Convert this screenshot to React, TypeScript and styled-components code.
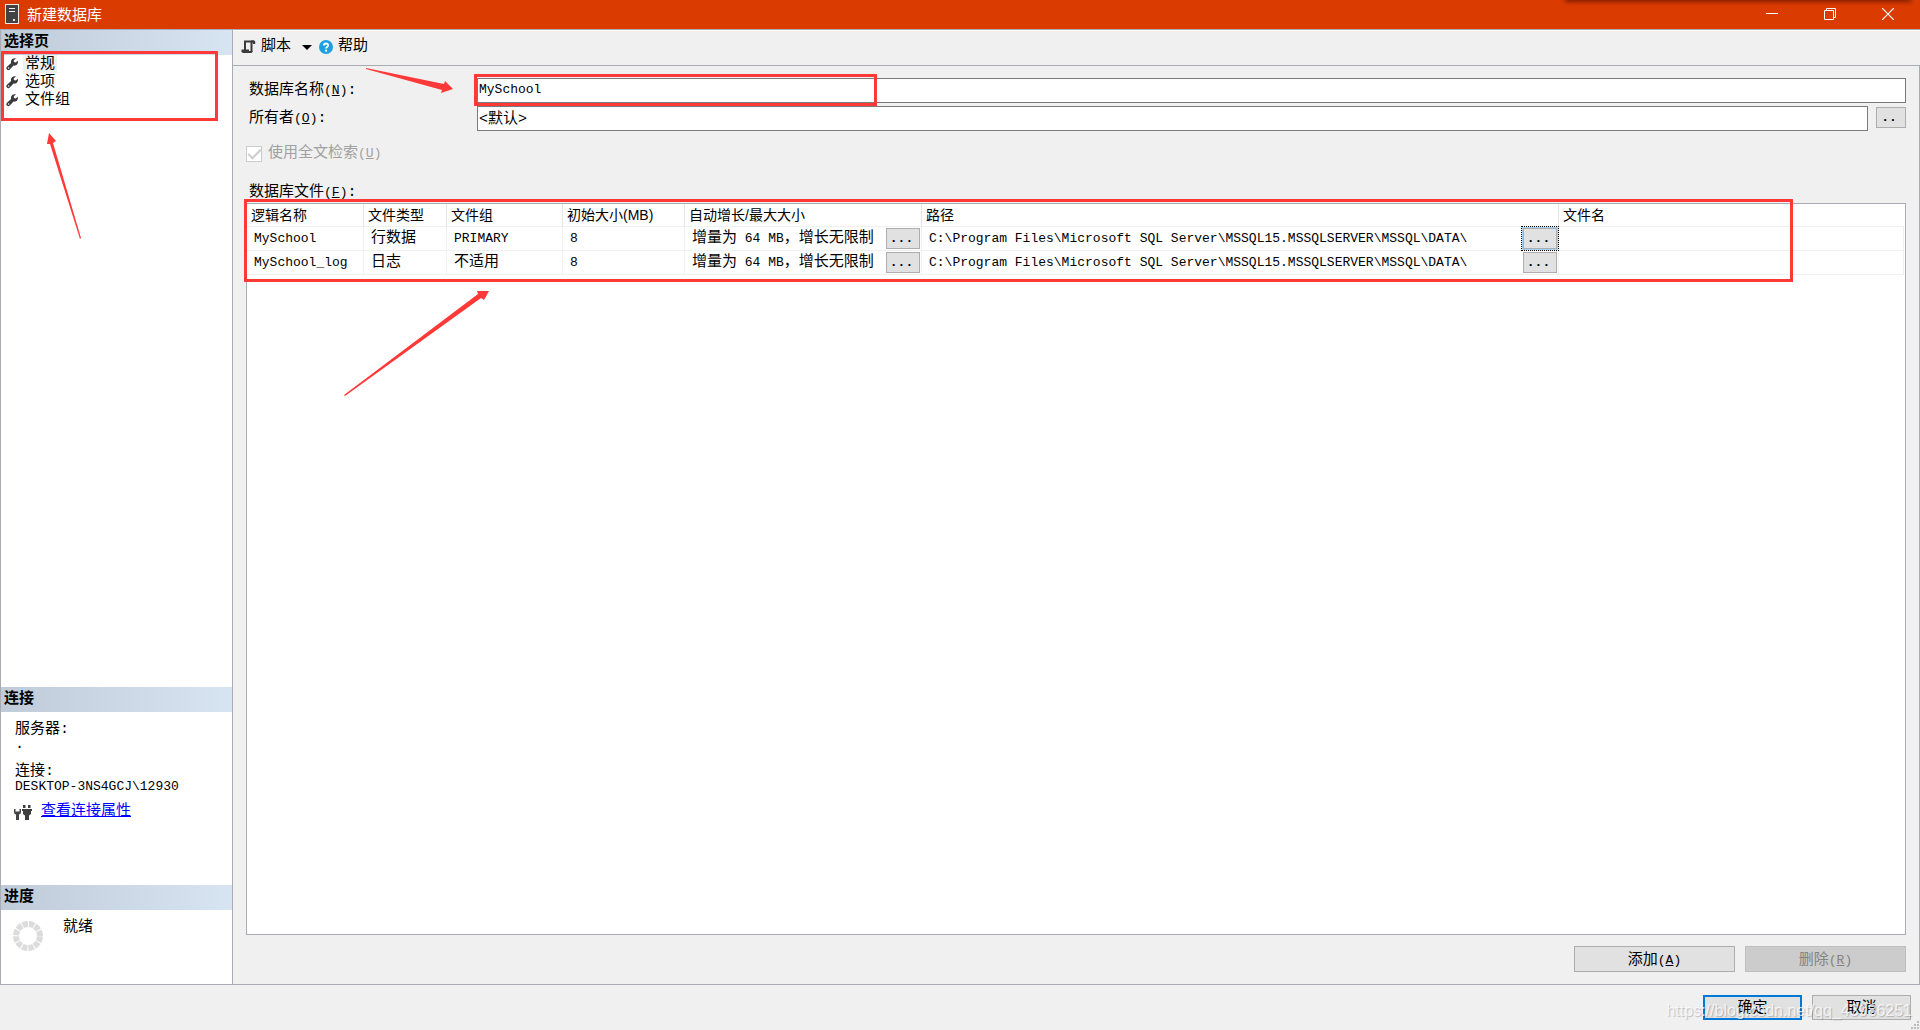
import React from "react";
import styled, { createGlobalStyle, css } from "styled-components";

const RED = "#ff3838";
const LINE = "#a9acb2";

const GlobalStyle = createGlobalStyle`
  * { box-sizing: border-box; }
  html, body { margin: 0; height: 100%; }
  #root { height: 100%; }
  body, button, input {
    font-family: "Liberation Mono", "Noto Sans CJK SC", monospace;
    font-size: 15px;
    line-height: 18px;
    color: #000;
  }
`;

const Window = styled.div`
  min-height: 100vh;
  display: flex;
  flex-direction: column;
  background: #f0f0f0;
  position: relative;
  overflow: hidden;
`;

const Latin = styled.span`
  font-size: 13px;
`;

const TitleBar = styled.header`
  height: 29px;
  display: flex;
  align-items: center;
  padding: 0 3px 1px 5px;
  background: #da3b01;
  color: #fff;
  position: relative;
`;

const Title = styled.h1`
  flex: 1;
  margin: 0 0 0 8px;
  font: 400 15px/20px "Noto Sans CJK SC", sans-serif;
`;

const TitleShadow = styled.div`
  position: absolute;
  top: -4px;
  right: 10px;
  width: 344px;
  height: 4px;
  box-shadow: 0 1px 4px 1px rgba(90, 20, 0, 0.7);
`;

const CaptionButton = styled.button`
  width: 58px;
  height: 28px;
  padding: 0;
  border: 0;
  background: transparent;
  color: #fff;
  display: flex;
  align-items: center;
  justify-content: center;
`;

const Body = styled.div`
  flex: 1;
  display: flex;
  border-top: 1px solid ${LINE};
  border-left: 1px solid ${LINE};
  border-bottom: 1px solid ${LINE};
`;

const Sidebar = styled.aside`
  width: 232px;
  display: flex;
  flex-direction: column;
  background: #fff;
  border-right: 1px solid ${LINE};
`;

const SideHeader = styled.h2`
  height: 25px;
  margin: 0;
  padding-left: 3px;
  font: 700 15px/20px "Noto Sans CJK SC", sans-serif;
  background: linear-gradient(90deg, #bfcbd9, #d7e4f2);
`;

const PageSection = styled.nav`
  flex: 1;
`;

const ConnectionSection = styled.section`
  height: 198px;
`;

const ProgressSection = styled.section`
  height: 99px;
`;

const PageList = styled.ul`
  list-style: none;
  margin: 0;
  padding: 0;
`;

const PageItem = styled.li`
  display: flex;
  align-items: center;
  height: 18px;
  padding-left: 5px;
  gap: 3px;
`;

const PageLink = styled.a<{ $active?: boolean }>`
  height: 18px;
  padding: 0 2px;
  line-height: 20px;
  color: #000;
  text-decoration: none;
  background: ${(p) => (p.$active ? "#f0f0f0" : "transparent")};
`;

const ConnectionInfo = styled.dl`
  margin: 0;
  padding: 9px 14px 0;
  dt { height: 16px; line-height: 18px; }
  dd { margin: 0 0 10px; line-height: 16px; }
  dd:last-child { margin-bottom: 8px; }
`;

const LinkRow = styled.div`
  display: flex;
  align-items: center;
  gap: 8px;
  padding: 0 12px;
`;

const PropertiesLink = styled.a`
  color: #0000ff;
  text-decoration: underline;
`;

const ProgressRow = styled.div`
  display: flex;
  align-items: flex-start;
  gap: 20px;
  padding: 9px 12px;
`;

const Main = styled.main`
  flex: 1;
  min-width: 0;
  display: flex;
  flex-direction: column;
`;

const Toolbar = styled.div`
  height: 36px;
  display: flex;
  align-items: center;
  gap: 5px;
  padding: 0 8px 2px;
  border-top: 1px solid #fff;
  border-bottom: 1px solid ${LINE};
`;

const ToolButton = styled.button`
  display: flex;
  align-items: center;
  gap: 5px;
  padding: 0;
  border: 0;
  background: transparent;
`;

const Content = styled.div`
  flex: 1;
  display: flex;
  flex-direction: column;
  padding: 12px 13px 12px 13px;
  border-right: 1px solid ${LINE};
`;

const Field = styled.div`
  display: flex;
  align-items: center;
  height: 25px;
  margin-bottom: 3px;
`;

const FieldLabel = styled.label`
  width: 231px;
  padding-left: 3px;
  white-space: pre;
`;

const TextBox = styled.input`
  flex: 1;
  min-width: 0;
  height: 25px;
  padding: 0 1px 3px;
  border: 1px solid #7a7a7a;
  border-radius: 0;
  background: #fff;
  font-size: ${(p) => (p.readOnly ? "15px" : "13px")};
  outline: 0;
`;

const buttonFace = css`
  border: 1px solid #adadad;
  border-radius: 0;
  background: #e1e1e1;
  padding: 0;
`;

const BrowseButton = styled.button`
  ${buttonFace}
  width: 30px;
  height: 21px;
  margin: 0 0 3px 8px;
  padding-right: 4px;
  font: 700 13px/19px "Liberation Mono", monospace;
`;

const CheckLabel = styled.label`
  display: flex;
  align-items: center;
  gap: 6px;
  height: 20px;
  margin-top: 10px;
  line-height: 20px;
  color: #a0a0a0;
`;

const CheckBox = styled.input`
  appearance: none;
  width: 16px;
  height: 16px;
  margin: 0;
  border: 1px solid #ccc;
  background: #fff;
  display: grid;
  place-items: center;
  &:checked::after {
    content: "";
    width: 11px;
    height: 5px;
    margin-bottom: 3px;
    border-left: 2px solid #ccc;
    border-bottom: 2px solid #ccc;
    transform: rotate(-45deg);
  }
`;

const GridLabel = styled.div`
  margin: 19px 0 0 3px;
  height: 20px;
  line-height: 20px;
`;

const GridFrame = styled.div`
  flex: 1;
  background: #fff;
  border: 1px solid ${LINE};
  padding-right: 1px;
`;

const Grid = styled.table`
  width: 100%;
  table-layout: fixed;
  border-collapse: separate;
  border-spacing: 0;
`;

const HeadCell = styled.th`
  height: 23px;
  padding: 0 0 0 4px;
  text-align: left;
  font: 400 14px/18px "Liberation Sans", "Noto Sans CJK SC", sans-serif;
  border-bottom: 1px solid #f0f0f0;
  border-right: 1px solid #e5e5e5;
  &:last-child { border-right: 0; }
`;

const Cell = styled.td`
  height: 24px;
  padding: 0 1px 0 7px;
  border-right: 1px solid #f0f0f0;
  border-bottom: 1px solid #f0f0f0;
  white-space: nowrap;
`;

const CellRow = styled.div`
  display: flex;
  align-items: center;
  justify-content: space-between;
`;

const CellButton = styled.button<{ $focused?: boolean }>`
  ${buttonFace}
  width: 34px;
  height: 21px;
  padding-right: 3px;
  font: 700 13px/19px "Liberation Mono", monospace;
  ${(p) => p.$focused && css`
    box-shadow: 0 0 0 1px #a8d0f0;
    outline: 1px dotted #000;
    outline-offset: 1px;
  `}
`;

const GridActions = styled.div`
  display: flex;
  justify-content: flex-end;
  gap: 10px;
  margin-top: 11px;
`;

const ActionButton = styled.button`
  ${buttonFace}
  width: 161px;
  height: 26px;
  padding-top: 3px;
  &:disabled { background: #ccc; border-color: #bfbfbf; color: #838383; }
`;

const Footer = styled.footer`
  height: 45px;
  display: flex;
  align-items: flex-start;
  justify-content: flex-end;
  gap: 10px;
  padding: 10px 9px 0;
  position: relative;
`;

const DialogButton = styled.button<{ $primary?: boolean }>`
  ${buttonFace}
  width: 99px;
  height: 25px;
  padding-top: 3px;
  ${(p) => p.$primary && "border: 2px solid #0078d7;"}
`;

const Watermark = styled.div`
  position: absolute;
  right: 8px;
  bottom: 8px;
  font: 400 16px/22px "Liberation Sans", sans-serif;
  color: rgba(255, 255, 255, 0.75);
  text-shadow: 1px 1px 1px rgba(0, 0, 0, 0.22);
  pointer-events: none;
`;

const Grip = styled.svg`
  position: absolute;
  right: 0;
  bottom: 0;
`;

const Highlight = styled.div<{ $x: number; $y: number; $w: number; $h: number }>`
  position: absolute;
  left: ${(p) => p.$x}px;
  top: ${(p) => p.$y}px;
  width: ${(p) => p.$w}px;
  height: ${(p) => p.$h}px;
  border: 3px solid ${RED};
  pointer-events: none;
`;

const Arrows = styled.svg`
  position: absolute;
  left: 0;
  top: 0;
  pointer-events: none;
`;

const Wrench = () => (
  <svg width="14" height="14" viewBox="0 0 14 14" aria-hidden="true">
    <path d="M11.8 3.700 9.700 5.400 7.900 4.900 7.800 3.200 9.900 1.400C7.700.7 5.400 1.900 5 4.100c-.2.8-.1 1.400.1 2L1 9.800c-.9.9-.9 2 0 2.800.8.8 2 .7 2.800-.2l3.700-3.900c2.500.7 5.100-1.500 4.300-4.800z" fill="#3a3a3c" />
    <circle cx="2.600" cy="11" r=".7" fill="#fff" />
  </svg>
);

const ServerIcon = () => (
  <svg width="14" height="20" viewBox="0 0 14 20" aria-hidden="true">
    <rect x=".5" y=".5" width="13" height="19" fill="#424242" stroke="#f5e8e2" />
    <path d="M4 4.500h6M4 7.500h6" stroke="#f0f0f0" />
    <rect x="8" y="15" width="2" height="2" fill="#e8e8e8" />
  </svg>
);

const ScriptIcon = () => (
  <svg width="15" height="14" viewBox="0 0 15 14" aria-hidden="true">
    <path d="M4 10V1.500h9M10.500 2v10" fill="none" stroke="#3b3b3d" strokeWidth="2" />
    <path d="M10 .5h3.200l1 1V4H12V2.500h-2zM.5 9.500H8V11h3.500v1l-1 1H2l-1.500-1z" fill="#3b3b3d" />
  </svg>
);

const HelpIcon = () => (
  <svg width="14" height="14" viewBox="0 0 14 14" aria-hidden="true">
    <circle cx="7" cy="7" r="7" fill="#1ba1e2" />
    <path d="M4.900 5.400C4.900 2.900 9.200 2.900 9.200 5.300 9.200 6.800 7.100 6.700 7.100 8.600" fill="none" stroke="#fff" strokeWidth="1.800" />
    <rect x="6.100" y="9.600" width="2" height="2" fill="#fff" />
  </svg>
);

const PlugIcon = () => (
  <svg width="20" height="17" viewBox="0 0 20 17" aria-hidden="true">
    <path d="M1 5v3q0 2 2 2.500V16h3v-5.500q2-.5 2-2.500V5H6.500v2.500h-4V5z" fill="#444" />
    <path d="M10 1h2.500v3H10zM15 1h2.500v3H15zM9 5h10v2h-1v3l-2 1.500V16h-4v-4.500L10 10V7H9z" fill="#3d3d3d" />
  </svg>
);

const columns = [
  { name: "逻辑名称", width: 117 },
  { name: "文件类型", width: 83 },
  { name: "文件组", width: 116 },
  { name: "初始大小(MB)", width: 122 },
  { name: "自动增长/最大大小", width: 237 },
  { name: "路径", width: 637 },
  { name: "文件名" },
];

const dataPath = "C:\\Program Files\\Microsoft SQL Server\\MSSQL15.MSSQLSERVER\\MSSQL\\DATA\\";

const files = [
  { name: "MySchool", type: "行数据", group: <Latin>PRIMARY</Latin>, focused: true },
  { name: "MySchool_log", type: "日志", group: "不适用", focused: false },
];

const Key = ({ k }: { k: string }) => <Latin>(<u>{k}</u>)</Latin>;

export default function App() {
  return (
    <Window>
      <GlobalStyle />
      <TitleBar>
        <ServerIcon />
        <Title>新建数据库</Title>
        <TitleShadow />
        <CaptionButton aria-label="最小化">
          <svg width="12" height="12"><path d="M0 5.500h12" stroke="#fff" /></svg>
        </CaptionButton>
        <CaptionButton aria-label="还原">
          <svg width="12" height="12" fill="none" stroke="#fff"><path d="M.5 2.500h9v9h-9zM2.500 2V.5h9v9H10" /></svg>
        </CaptionButton>
        <CaptionButton aria-label="关闭">
          <svg width="12" height="12"><path d="M0 0 12 12M12 0 0 12" stroke="#fff" strokeWidth="1.200" /></svg>
        </CaptionButton>
      </TitleBar>

      <Body>
        <Sidebar>
          <PageSection>
            <SideHeader>选择页</SideHeader>
            <PageList>
              {["常规", "选项", "文件组"].map((page, i) => (
                <PageItem key={page}>
                  <Wrench />
                  <PageLink href="#" $active={i === 0}>{page}</PageLink>
                </PageItem>
              ))}
            </PageList>
          </PageSection>
          <ConnectionSection>
            <SideHeader>连接</SideHeader>
            <ConnectionInfo>
              <dt>服务器:</dt>
              <dd>.</dd>
              <dt>连接:</dt>
              <dd><Latin>DESKTOP-3NS4GCJ\12930</Latin></dd>
            </ConnectionInfo>
            <LinkRow>
              <PlugIcon />
              <PropertiesLink href="#">查看连接属性</PropertiesLink>
            </LinkRow>
          </ConnectionSection>
          <ProgressSection>
            <SideHeader>进度</SideHeader>
            <ProgressRow>
              <svg width="30" height="32" viewBox="0 0 30 32" aria-hidden="true">
                <circle cx="15" cy="17" r="12" fill="none" stroke="#dcdcdc" strokeWidth="6" strokeDasharray="5.283 1" strokeDashoffset="-0.5" />
              </svg>
              <span>就绪</span>
            </ProgressRow>
          </ProgressSection>
        </Sidebar>

        <Main>
          <Toolbar>
            <ToolButton>
              <ScriptIcon />
              脚本
              <svg width="18" height="6"><path d="M6 1h10l-5 5z" fill="#000" /></svg>
            </ToolButton>
            <ToolButton>
              <HelpIcon />
              帮助
            </ToolButton>
          </Toolbar>

          <Content>
            <Field>
              <FieldLabel htmlFor="db-name">数据库名称<Key k="N" />:</FieldLabel>
              <TextBox id="db-name" defaultValue="MySchool" />
            </Field>
            <Field>
              <FieldLabel htmlFor="owner">所有者<Key k="O" />:</FieldLabel>
              <TextBox id="owner" readOnly value="<默认>" />
              <BrowseButton aria-label="浏览所有者">..</BrowseButton>
            </Field>
            <CheckLabel>
              <CheckBox type="checkbox" defaultChecked disabled />
              <span>使用全文检索<Key k="U" /></span>
            </CheckLabel>
            <GridLabel id="files-label">数据库文件<Key k="F" />:</GridLabel>
            <GridFrame>
              <Grid aria-labelledby="files-label">
                <colgroup>
                  {columns.map((c) => <col key={c.name} width={c.width} />)}
                </colgroup>
                <thead>
                  <tr>{columns.map((c) => <HeadCell key={c.name}>{c.name}</HeadCell>)}</tr>
                </thead>
                <tbody>
                  {files.map((f) => (
                    <tr key={f.name}>
                      <Cell><Latin>{f.name}</Latin></Cell>
                      <Cell>{f.type}</Cell>
                      <Cell>{f.group}</Cell>
                      <Cell><Latin>8</Latin></Cell>
                      <Cell>
                        <CellRow>
                          <span>增量为<Latin> 64 MB</Latin>，增长无限制</span>
                          <CellButton aria-label="更改自动增长">...</CellButton>
                        </CellRow>
                      </Cell>
                      <Cell>
                        <CellRow>
                          <Latin>{dataPath}</Latin>
                          <CellButton aria-label="浏览路径" $focused={f.focused}>...</CellButton>
                        </CellRow>
                      </Cell>
                      <Cell />
                    </tr>
                  ))}
                </tbody>
              </Grid>
            </GridFrame>
            <GridActions>
              <ActionButton>添加<Key k="A" /></ActionButton>
              <ActionButton disabled>删除<Key k="R" /></ActionButton>
            </GridActions>
          </Content>
        </Main>
      </Body>

      <Footer>
        <DialogButton $primary>确定</DialogButton>
        <DialogButton>取消</DialogButton>
        <Watermark>https://blog.csdn.net/qq_43986251</Watermark>
        <Grip width="9" height="9" aria-hidden="true">
          <path d="M6 0h2v2H6zM3 3h2v2H3zM6 3h2v2H6zM0 6h2v2H0zM3 6h2v2H3zM6 6h2v2H6z" fill="#bcbcbc" />
        </Grip>
      </Footer>

      <Highlight $x={1} $y={51} $w={217} $h={70} />
      <Highlight $x={474} $y={74} $w={403} $h={32} />
      <Highlight $x={244} $y={199} $w={1549} $h={83} />
      <Arrows width="520" height="420" fill={RED} aria-hidden="true">
        <path d="M49 133 56 141 53 143 81 238 80 239 50 144 47 144z" />
        <path d="M366 68 444 84 445 81 453 89 441 93 442 90 366 69z" />
        <path d="M344 395 478 294 477 291 489 291 484 300 481 298 345 396z" />
      </Arrows>
    </Window>
  );
}
